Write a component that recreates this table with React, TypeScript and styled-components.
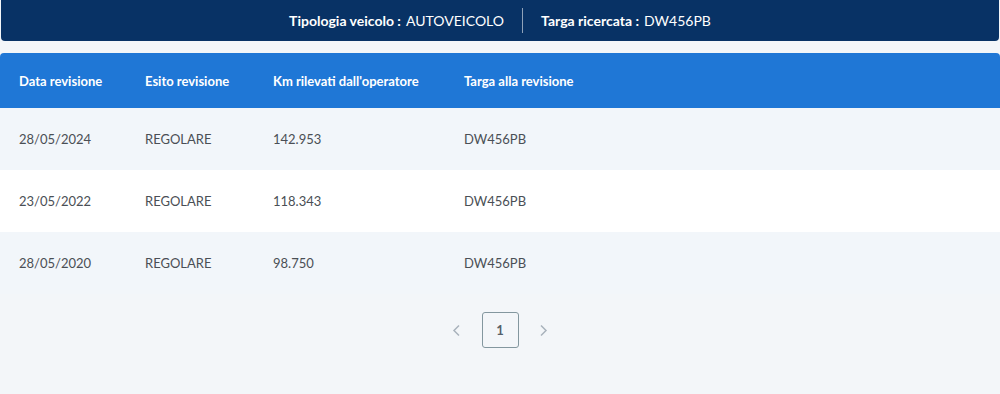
import styled, { createGlobalStyle } from "styled-components";

const GlobalStyle = createGlobalStyle`
  html, body {
    margin: 0;
    padding: 0;
    background: #f3f6f9;
    font-family: "Lato", "Open Sans", sans-serif;
  }
`;

const Page = styled.main`
  width: 1000px;
  height: 394px;
  background: #f3f6f9;
  overflow: hidden;
`;

const InfoBar = styled.header`
  height: 41px;
  margin: 0 1px;
  background: #083265;
  border-radius: 0 0 4px 4px;
  display: flex;
  align-items: center;
  justify-content: center;
  color: #ffffff;
  font-size: 14px;
`;

const InfoItem = styled.div`
  display: flex;
  align-items: center;
  gap: 5px;
  padding: 0 18px;
  height: 25px;

  & + & {
    border-left: 1px solid rgba(255, 255, 255, 0.55);
  }

  b {
    font-weight: 700;
  }
`;

const Table = styled.section`
  margin-top: 12px;
`;

const Row = styled.div<{ $tone: "head" | "light" | "white" }>`
  display: grid;
  grid-template-columns: 126px 128px 191px 1fr;
  align-items: center;
  padding-left: 19px;
  height: ${(p) => (p.$tone === "head" ? "55px" : "62px")};
  background: ${(p) =>
    p.$tone === "head" ? "#1f77d6" : p.$tone === "white" ? "#ffffff" : "#f2f6fa"};
  border-radius: ${(p) => (p.$tone === "head" ? "4px 4px 0 0" : "0")};
  color: ${(p) => (p.$tone === "head" ? "#ffffff" : "#4a4f55")};
  font-size: 13px;
  font-weight: ${(p) => (p.$tone === "head" ? 700 : 400)};
`;

const Pager = styled.nav`
  display: flex;
  align-items: center;
  justify-content: center;
  gap: 15px;
  padding-top: 18px;
`;

const Arrow = styled.span`
  display: flex;
  width: 20px;
  justify-content: center;
  color: #a9b2bc;
`;

const PageBox = styled.span`
  width: 37px;
  height: 36px;
  box-sizing: border-box;
  border: 1.5px solid #83979f;
  border-radius: 3px;
  display: flex;
  align-items: center;
  justify-content: center;
  font-size: 13px;
  font-weight: 700;
  color: #55606a;
`;

const Chevron = ({ dir }: { dir: "left" | "right" }) => (
  <svg width="9" height="13" viewBox="0 0 9 13" fill="none">
    <path
      d={dir === "left" ? "M7 1.5L2 6.5L7 11.5" : "M2 1.5L7 6.5L2 11.5"}
      stroke="currentColor"
      strokeWidth="1.5"
    />
  </svg>
);

const rows = [
  { data: "28/05/2024", esito: "REGOLARE", km: "142.953", targa: "DW456PB" },
  { data: "23/05/2022", esito: "REGOLARE", km: "118.343", targa: "DW456PB" },
  { data: "28/05/2020", esito: "REGOLARE", km: "98.750", targa: "DW456PB" },
];

export default function App() {
  return (
    <>
      <GlobalStyle />
      <Page>
        <InfoBar>
          <InfoItem>
            <b>Tipologia veicolo :</b>
            <span>AUTOVEICOLO</span>
          </InfoItem>
          <InfoItem>
            <b>Targa ricercata :</b>
            <span>DW456PB</span>
          </InfoItem>
        </InfoBar>
        <Table>
          <Row $tone="head">
            <span>Data revisione</span>
            <span>Esito revisione</span>
            <span>Km rilevati dall'operatore</span>
            <span>Targa alla revisione</span>
          </Row>
          {rows.map((r, i) => (
            <Row key={r.data} $tone={i % 2 === 0 ? "light" : "white"}>
              <span>{r.data}</span>
              <span>{r.esito}</span>
              <span>{r.km}</span>
              <span>{r.targa}</span>
            </Row>
          ))}
        </Table>
        <Pager>
          <Arrow>
            <Chevron dir="left" />
          </Arrow>
          <PageBox>1</PageBox>
          <Arrow>
            <Chevron dir="right" />
          </Arrow>
        </Pager>
      </Page>
    </>
  );
}
